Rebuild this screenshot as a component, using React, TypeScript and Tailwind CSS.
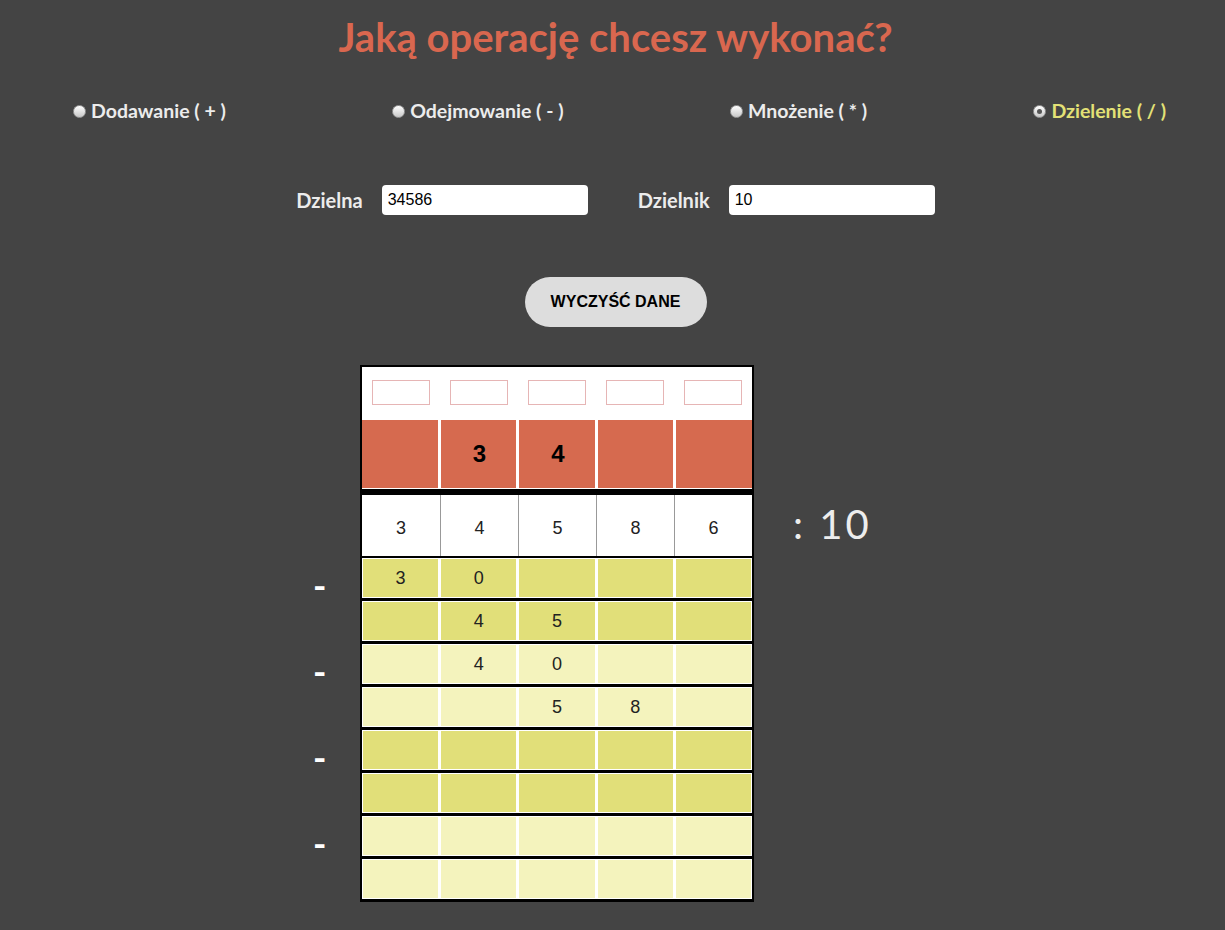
import React from 'react';

const ops = [
  { label: 'Dodawanie ( + )', checked: false },
  { label: 'Odejmowanie ( - )', checked: false },
  { label: 'Mnożenie ( * )', checked: false },
  { label: 'Dzielenie ( / )', checked: true },
];

const quotient = ['', '3', '4', '', ''];
const dividend = ['3', '4', '5', '8', '6'];

// rows under the dividend: [digits, tone]
const steps: { cells: string[]; light: boolean }[] = [
  { cells: ['3', '0', '', '', ''], light: false },
  { cells: ['', '4', '5', '', ''], light: false },
  { cells: ['', '4', '0', '', ''], light: true },
  { cells: ['', '', '5', '8', ''], light: true },
  { cells: ['', '', '', '', ''], light: false },
  { cells: ['', '', '', '', ''], light: false },
  { cells: ['', '', '', '', ''], light: true },
  { cells: ['', '', '', '', ''], light: true },
];

function Radio({ checked }: { checked: boolean }) {
  return (
    <span className="w-[13px] h-[13px] rounded-full border border-[#9a9a9a] bg-gradient-to-b from-white to-[#c8c8c8] flex items-center justify-center shrink-0">
      {checked && <span className="w-[5px] h-[5px] rounded-full bg-[#555]" />}
    </span>
  );
}

export default function App() {
  return (
    <div className="min-h-[930px] bg-[#444444] pt-[13px] font-['Lato',sans-serif]">
      {/* Title */}
      <h1 className="text-center pl-[6px] text-[40px] leading-[48px] font-bold text-[#d9674f]">
        Jaką operację chcesz wykonać?
      </h1>

      {/* Operation radios */}
      <div className="mt-[38px] flex justify-between pl-[73px] pr-[59px]">
        {ops.map((op) => (
          <label key={op.label} className="flex items-center gap-[5px] leading-[24px]">
            <Radio checked={op.checked} />
            <span className={`text-[19.5px] font-bold ${op.checked ? 'text-[#e3e176]' : 'text-[#ececec]'}`}>
              {op.label}
            </span>
          </label>
        ))}
      </div>

      {/* Inputs */}
      <div className="mt-[62px] flex justify-center items-center pl-[6px]">
        <span className="text-[20px] font-bold text-[#ececec]">Dzielna</span>
        <div className="ml-[19px] w-[206px] h-[30px] bg-white rounded-[4px] flex items-center px-[6px] font-['Liberation_Sans',Arial,sans-serif] text-[16px] text-black">
          34586
        </div>
        <span className="ml-[50px] text-[20px] font-bold text-[#ececec]">Dzielnik</span>
        <div className="ml-[19px] w-[206px] h-[30px] bg-white rounded-[4px] flex items-center px-[6px] font-['Liberation_Sans',Arial,sans-serif] text-[16px] text-black">
          10
        </div>
      </div>

      {/* Clear button */}
      <div className="mt-[62px] flex justify-center pl-[6px]">
        <button className="w-[182px] h-[50px] rounded-full bg-[#dddddd] font-['Liberation_Sans',Arial,sans-serif] font-bold text-[16px] text-black">
          WYCZYŚĆ DANE
        </button>
      </div>

      {/* Long division */}
      <div className="mt-[38px] flex pl-[313px] pb-[28px]">
        <div className="w-[47px] pt-[193px] flex flex-col">
          {[0, 1, 2, 3].map((i) => (
            <div key={i} className="h-[86px] pt-[9px] text-white text-[36px] leading-[36px] font-bold">
              -
            </div>
          ))}
        </div>

        <div className="w-[394px] border-x-2 border-t-2 border-black font-['Liberation_Sans',Arial,sans-serif]">
          {/* quotient boxes */}
          <div className="h-[53px] bg-white grid grid-cols-5 items-center">
            {[0, 1, 2, 3, 4].map((i) => (
              <div key={i} className="flex justify-center pb-[2px]">
                <div className="w-[58px] h-[25px] border border-[#e6b5b5] bg-white" />
              </div>
            ))}
          </div>
          <div className="bg-white pb-[1px] grid grid-cols-5 gap-[3px]">
            {quotient.map((d, i) => (
              <div key={i} className="h-[68px] bg-[#d66a4f] flex items-center justify-center pl-[2px] text-[24px] font-bold text-black">
                {d}
              </div>
            ))}
          </div>
          <div className="h-[6px] bg-black" />
          {/* dividend */}
          <div className="h-[61px] bg-white grid grid-cols-5">
            {dividend.map((d, i) => (
              <div
                key={i}
                className={`flex items-center justify-center pt-[5px] text-[18px] text-[#222] ${i > 0 ? 'border-l border-[#999]' : ''}`}
              >
                {d}
              </div>
            ))}
          </div>
          <div className="h-[2px] bg-black" />
          {steps.map((row, r) => (
            <div key={r} className="bg-white p-[1px] grid grid-cols-5 gap-[3px] border-b-[3px] border-black">
              {row.cells.map((d, i) => (
                <div
                  key={i}
                  className={`h-[38px] flex items-center justify-center text-[18px] text-[#222] ${row.light ? 'bg-[#f4f3bd]' : 'bg-[#e1df79]'}`}
                >
                  {d}
                </div>
              ))}
            </div>
          ))}
        </div>

        <div className="ml-[39px] pt-[135px] text-[40px] leading-[48px] tracking-[3px] text-[#ededed]">
          : 10
        </div>
      </div>
    </div>
  );
}
